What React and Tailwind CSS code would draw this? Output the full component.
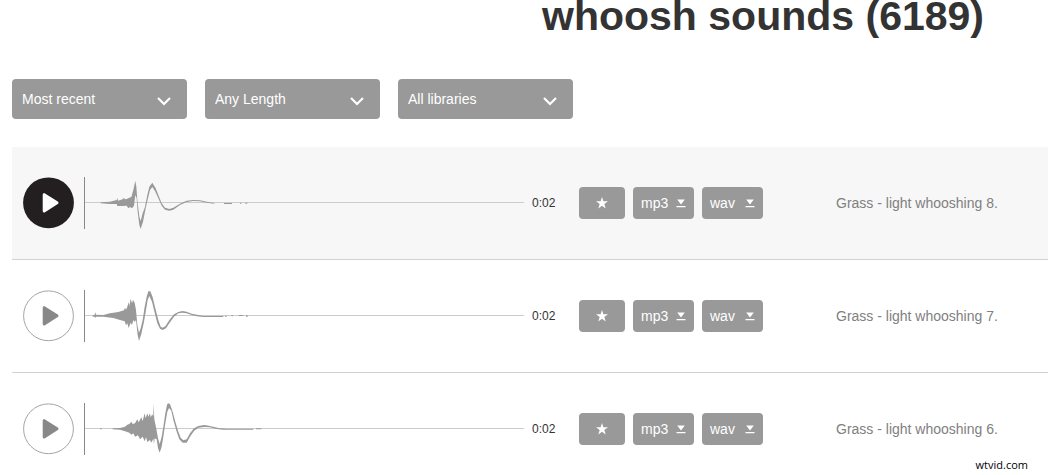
const FILTERS = [
  { id: 'sort', label: 'Sort by', options: ['Most recent', 'Most popular'] },
  { id: 'length', label: 'Length', options: ['Any Length', 'Short', 'Long'] },
  { id: 'library', label: 'Library', options: ['All libraries'] },
]

// wave outlines are drawn on a grid of 3 units per pixel
const TRACKS = [
  {
    name: 'Grass - light whooshing 8.',
    length: '0:02',
    active: true,
    box: '222 96 1320 156',
    wave: 'M272 172L300 170L320 165L322 159L324 167L338 163L342 158L344 163L350 162L358 158L364 156L370 135L376 107L379 125L382 165L388 215L392 228L398 205L405 185L412 150L418 125L427 113L437 130L445 150L455 175L465 188L478 192L490 188L510 176L530 167L550 165L570 166L590 170L613 174V176L590 173L570 169L550 168L530 171L510 180L490 194L478 197L465 194L455 182L445 160L435 138L427 126L420 135L414 160L407 190L399 230L392 252L388 240L383 200L380 160L376 150L372 182L366 190L360 186L355 190L350 182L338 183L322 183L320 177L300 177L272 175ZM642 174H666V177H642ZM690 173H694V176H690ZM706 173H712V176H706Z',
  },
  {
    name: 'Grass - light whooshing 7.',
    length: '0:02',
    active: false,
    box: '222 90 1320 156',
    wave: 'M248 166L254 164L256 156L258 164L280 165L300 160L325 156L342 151L345 143L348 149L352 140L356 126L358 138L362 116L366 130L369 120L374 128L378 150L382 195L387 218L392 205L398 180L404 140L410 110L415 94L421 94L428 112L436 145L445 180L452 200L458 203L466 199L478 180L492 163L505 156L517 153L530 155L545 161L565 165L580 168L640 168V171L580 171L560 169L545 165L530 160L517 158L505 160L492 170L478 190L468 205L458 210L450 206L442 190L434 158L426 125L418 108L413 120L408 150L402 185L394 222L387 243L383 225L378 180L374 186L370 180L366 195L362 188L356 204L352 190L348 196L344 184L330 180L310 174L280 170L258 170L256 174L254 170L248 170ZM645 167H650V170H645ZM664 166H669V169H664ZM686 165H700V168H686ZM708 166H713V170H708Z',
  },
  {
    name: 'Grass - light whooshing 6.',
    length: '0:02',
    active: false,
    box: '222 99 1320 156',
    wave: 'M308 175L330 174L345 170L352 164L358 162L364 155L368 162L375 160L382 148L386 157L394 142L398 153L404 130L407 145L412 130L415 140L420 130L422 142L427 133L430 140L431 100L433 148L438 172L444 205L449 222L455 200L460 170L466 130L471 104L474 100L480 102L488 125L496 155L505 185L512 203L520 211L530 208L540 190L552 175L565 168L583 165L600 168L625 174L650 176L730 176V179L640 179L620 177L600 172L583 171L565 173L552 183L540 200L530 218L518 218L508 208L500 185L490 150L484 122L477 114L472 125L466 160L460 200L455 230L449 248L444 235L440 208L434 205L432 222L430 206L424 218L420 210L412 216L408 202L404 214L398 200L390 208L384 196L375 200L370 190L364 194L358 188L345 184L330 179L308 178ZM270 175H275V178H270ZM738 175H754V178H738Z',
  },
]

function Filter({ id, label, options }) {
  return (
    <div className="relative w-[175px]">
      <label htmlFor={id} className="sr-only">{label}</label>
      <select id={id}
        className="block w-full h-10 appearance-none rounded bg-[#999] pl-2.5 pr-10 text-sm text-white">
        {options.map(o => <option key={o}>{o}</option>)}
      </select>
      <svg viewBox="0 0 14 9" className="pointer-events-none absolute right-4 top-[18px] w-3.5 h-[9px]"
        fill="none" stroke="#fff" strokeWidth="2.2">
        <path d="M1 1L7 7L13 1" />
      </svg>
    </div>
  )
}

function PlayButton({ active }) {
  return (
    <button type="button" aria-label="Play" className="shrink-0 h-[52px] cursor-pointer">
      <svg viewBox="0 0 51 52" className="block w-[51px] h-[52px]">
        {active
          ? <circle cx="25.5" cy="25.8" r="25.4" fill="#231f20" />
          : <circle cx="25.5" cy="25.8" r="24.9" fill="#fff" stroke="#a5a5a5" />}
        <path d="M21.2 17.7V33.9L34 25.8Z" strokeWidth="3" strokeLinejoin="round"
          fill={active ? '#fff' : '#888'} stroke={active ? '#fff' : '#888'} />
      </svg>
    </button>
  )
}

function Waveform({ box, wave }) {
  return (
    <svg className="block flex-1 min-w-0 h-[52px] ml-2.5" aria-hidden="true">
      <rect x="0" y="25" width="100%" height="1" fill="#ccc" />
      <rect x="0" y="0" width="1" height="52" fill="#888" />
      <svg width="440" height="52" viewBox={box}>
        <path d={wave} fill="#999" />
      </svg>
    </svg>
  )
}

function DownloadButton({ format }) {
  return (
    <button type="button"
      className="flex items-center justify-between w-[61px] h-8 px-2 rounded bg-[#999] text-sm text-white cursor-pointer">
      {format}
      <svg viewBox="0 0 10 9" className="w-2.5 h-[9px]" fill="#fff">
        <path d="M1.2 0.5H8.8L5 5.6ZM0.5 7H9.5V8.2H0.5Z" />
      </svg>
    </button>
  )
}

function TrackRow({ track }) {
  return (
    <li className={`flex items-center h-[113px] pl-[11px] border-b border-[#d2d2d2] ${track.active ? 'bg-[#f7f7f7]' : 'bg-white'}`}>
      <PlayButton active={track.active} />
      <Waveform box={track.box} wave={track.wave} />
      <span className="w-[55px] shrink-0 pl-2 text-xs text-[#333]">{track.length}</span>
      <div className="flex shrink-0 gap-2">
        <button type="button" aria-label="Add to favourites"
          className="flex items-center justify-center w-[46px] h-8 rounded bg-[#999] cursor-pointer">
          <svg viewBox="0 0 12 12" className="w-3 h-3" fill="#fff">
            <path d="M6 0L7.4 4.3H12L8.3 7L9.7 11.5L6 8.8L2.3 11.5L3.7 7L0 4.3H4.6Z" />
          </svg>
        </button>
        <DownloadButton format="mp3" />
        <DownloadButton format="wav" />
      </div>
      <span className="w-[285px] shrink-0 pl-[73px] text-sm text-[#808080]">{track.name}</span>
    </li>
  )
}

export default function App() {
  return (
    <div className="relative max-h-screen overflow-hidden bg-white pl-3 font-['Liberation_Sans',Arial,sans-serif]">
      <h1 className="pr-16 text-right text-[41px] leading-8 font-bold text-[#333]">whoosh sounds (6189)</h1>

      <form className="flex gap-[18px] mt-[47px]">
        {FILTERS.map(f => <Filter key={f.id} {...f} />)}
      </form>

      <ul className="mt-7">
        {TRACKS.map(t => <TrackRow key={t.name} track={t} />)}
      </ul>

      <span className="absolute right-5 bottom-0.5 text-[11px] leading-4 text-black font-['Open_Sans',sans-serif]">wtvid.com</span>
    </div>
  )
}
